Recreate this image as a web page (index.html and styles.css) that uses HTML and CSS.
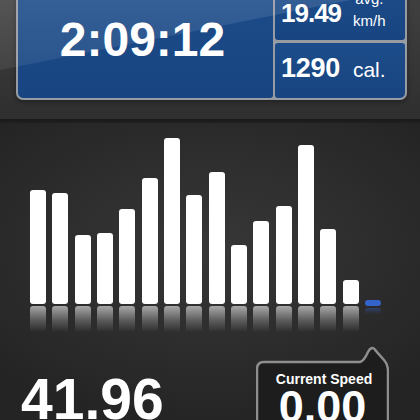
FILE: index.html
```html
<!DOCTYPE html>
<html lang="en">

<head>
  <meta charset="UTF-8">
  <meta name="viewport" content="width=device-width, initial-scale=1.0">
  <title>Workout Stats</title>
  <link rel="stylesheet" href="styles.css">
</head>

<body>
  <!-- Header: time, average speed, calories -->
  <header class="header">
    <div class="panel">
      <div class="cell cell-time">2:09:12</div>
      <div class="cell cell-stat cell-avg">
        <span class="stat-value stat-value-avg">19.49</span>
        <span class="stat-unit stat-unit-stack">avg.<br>km/h</span>
      </div>
      <div class="cell cell-stat cell-cal">
        <span class="stat-value">1290</span>
        <span class="stat-unit stat-unit-cal">cal.</span>
      </div>
    </div>
    <!-- glass shine across the header -->
    <svg class="gloss" width="420" height="119" viewBox="0 0 420 119" aria-hidden="true">
      <defs>
        <linearGradient id="shine" x1="0" y1="0" x2="0" y2="1">
          <stop offset="0" stop-color="#fff" stop-opacity="0.11" />
          <stop offset="1" stop-color="#fff" stop-opacity="0.07" />
        </linearGradient>
      </defs>
      <path d="M0 0 L350 0 L0 70 Z" fill="url(#shine)" />
    </svg>
  </header>
  <div class="divider"></div>

  <!-- Main: speed history and current values -->
  <main class="main">
    <div class="chart">
      <div class="col"><div class="bar" style="height:114px"></div><div class="reflection"></div></div>
      <div class="col"><div class="bar" style="height:111px"></div><div class="reflection"></div></div>
      <div class="col"><div class="bar" style="height:69px"></div><div class="reflection"></div></div>
      <div class="col"><div class="bar" style="height:71px"></div><div class="reflection"></div></div>
      <div class="col"><div class="bar" style="height:95px"></div><div class="reflection"></div></div>
      <div class="col"><div class="bar" style="height:126px"></div><div class="reflection"></div></div>
      <div class="col"><div class="bar" style="height:166px"></div><div class="reflection"></div></div>
      <div class="col"><div class="bar" style="height:109px"></div><div class="reflection"></div></div>
      <div class="col"><div class="bar" style="height:132px"></div><div class="reflection"></div></div>
      <div class="col"><div class="bar" style="height:59px"></div><div class="reflection"></div></div>
      <div class="col"><div class="bar" style="height:83px"></div><div class="reflection"></div></div>
      <div class="col"><div class="bar" style="height:98px"></div><div class="reflection"></div></div>
      <div class="col"><div class="bar" style="height:159px"></div><div class="reflection"></div></div>
      <div class="col"><div class="bar" style="height:75px"></div><div class="reflection"></div></div>
      <div class="col"><div class="bar" style="height:24px"></div><div class="reflection"></div></div>
      <div class="col"><div class="bar bar-live"></div><div class="reflection reflection-live"></div></div>
    </div>

    <div class="bottom">
      <div class="distance">41.96</div>
      <div class="bubble">
        <svg class="bubble-shape" width="133" height="96" viewBox="0 0 133 96" aria-hidden="true">
          <path d="M8 17 H104 Q108 16 112 7 Q116 -0.5 120 6 L128 15 Q132 19.5 132 26 V95 H1 V24 Q1 17 8 17 Z" />
        </svg>
        <div class="bubble-label">Current Speed</div>
        <div class="bubble-value">0.00</div>
      </div>
    </div>
  </main>
</body>

</html>
```

FILE: styles.css
```css
/* Reset */
* {
  margin: 0;
  padding: 0;
  box-sizing: border-box;
}

body {
  width: 420px;
  height: 420px;
  overflow: hidden;
  background: #2a2a2a;
  color: #fff;
  font-family: "Liberation Sans", Arial, sans-serif;
}

/* Header */
.header {
  position: relative;
  display: flex;
  flex-direction: column;
  height: 119px;
  padding: 0 13px 0 16px;
  background: linear-gradient(#3f3f3f, #2f2f2f);
}

.panel {
  display: grid;
  grid-template-columns: 255px 130px;
  grid-template-rows: 55px 55px;
  gap: 3px 2px;
  padding: 2px;
  margin-top: -17px;
  background: #979ba2;
  border-radius: 7px;
  box-shadow: 0 2px 5px rgba(0, 0, 0, 0.35);
}

.cell {
  background: linear-gradient(#1c4c8a, #184581);
  border-radius: 3px;
}

.cell-time {
  grid-row: 1 / 3;
  display: flex;
  justify-content: center;
  align-items: flex-start;
  padding: 31px 6px 0 0;
  font-size: 48px;
  font-weight: bold;
  line-height: 1;
  border-radius: 3px 3px 3px 5px;
}

.cell-stat {
  display: flex;
  align-items: flex-end;
  padding: 0 0 8px 6px;
}

.cell-cal {
  padding-bottom: 16px;
  border-radius: 3px 3px 5px 3px;
}

.stat-value {
  font-size: 27px;
  font-weight: bold;
  line-height: 1;
  letter-spacing: -0.3px;
}

.stat-value-avg {
  font-size: 26px;
  letter-spacing: -1px;
  margin-bottom: 6px;
}

.stat-unit {
  margin-left: 12px;
}

.stat-unit-stack {
  font-size: 15px;
  line-height: 22px;
  text-align: center;
}

.stat-unit-cal {
  font-size: 21px;
  line-height: 1;
  margin-left: 13px;
  margin-bottom: 2px;
}

.gloss {
  position: absolute;
  top: 0;
  left: 0;
  pointer-events: none;
}

.divider {
  height: 4px;
  background: linear-gradient(#191919, #202020);
}

/* Main */
.main {
  height: 297px;
  background: radial-gradient(ellipse 70% 60% at 50% 42%, #373737 0%, #2c2c2c 60%, #242424 100%);
}

.chart {
  display: grid;
  grid-template-columns: repeat(16, 16px);
  column-gap: 6.33px;
  padding: 7px 0 0 30px;
}

.col {
  display: flex;
  flex-direction: column;
  justify-content: flex-start;
  height: 202px;
}

.col .bar {
  margin-top: auto;
}

.bar {
  background: #fff;
  border-radius: 3px;
}

.reflection {
  height: 26px;
  margin-top: 2px;
  border-radius: 3px 3px 0 0;
  background: linear-gradient(rgba(255, 255, 255, 0.58), rgba(255, 255, 255, 0.22) 55%, rgba(255, 255, 255, 0));
}

.bar-live {
  height: 6px;
  background: #3563cc;
}

.reflection-live {
  height: 24px;
  background: linear-gradient(rgba(53, 99, 204, 0.4), rgba(53, 99, 204, 0) 25%);
}

/* Bottom values */
.bottom {
  display: flex;
  justify-content: space-between;
  align-items: flex-start;
  padding: 0 31px 0 21px;
}

.distance {
  margin-top: 39px;
  font-size: 57px;
  font-weight: bold;
  line-height: 1;
}

.bubble {
  position: relative;
  width: 133px;
  height: 80px;
  margin-top: 29px;
  padding-top: 10px;
  text-align: center;
}

.bubble-shape {
  position: absolute;
  top: -16px;
  left: 0;
}

.bubble-shape path {
  fill: #1d1d1d;
  stroke: #8e8e8e;
  stroke-width: 2.5;
}

.bubble-label,
.bubble-value {
  position: relative;
  font-weight: bold;
}

.bubble-label {
  font-size: 14px;
  line-height: 16px;
  padding-left: 3px;
}

.bubble-value {
  font-size: 45px;
  line-height: 40px;
}
```
